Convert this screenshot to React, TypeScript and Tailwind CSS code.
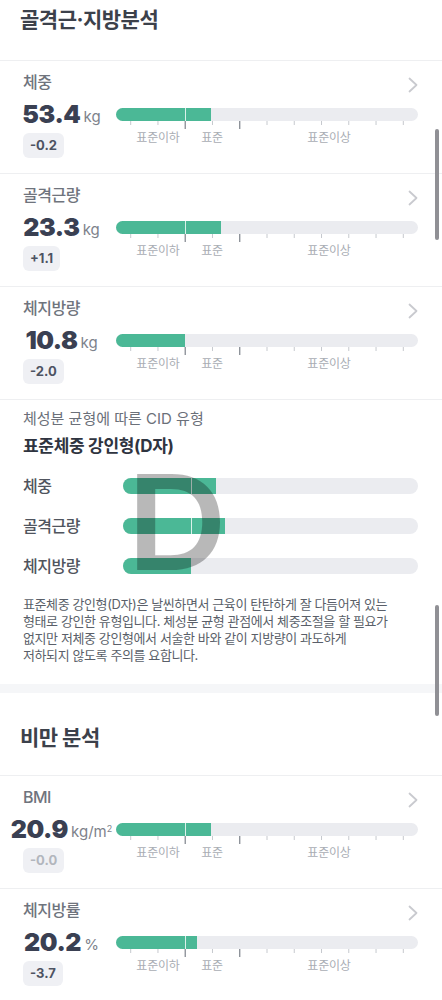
import React from "react";

type Metric = {
  label: string;
  value: string;
  unit: React.ReactNode;
  delta: string;
  muted?: boolean;
  fill: number;
  divider: boolean;
};

const TICKS = Array.from({ length: 11 }, (_, i) => 14.7 + 27.26 * i);

function Chevron() {
  return (
    <svg width="10" height="16" viewBox="0 0 10 16" className="mt-[5px]">
      <polyline
        points="1.5,1.5 8.5,8 1.5,14.5"
        fill="none"
        stroke="#c9cacf"
        strokeWidth="1.8"
        strokeLinecap="round"
        strokeLinejoin="round"
      />
    </svg>
  );
}

function Gauge({ fill, divider }: { fill: number; divider: boolean }) {
  return (
    <div className="w-[302px] shrink-0">
      <div className="relative h-[13px] rounded-full bg-[#ebecf0] overflow-hidden">
        <div className="h-full bg-[#4bb896]" style={{ width: fill }} />
        {divider && <div className="absolute top-0 bottom-0 left-[69px] w-px bg-white/80" />}
      </div>
      <svg width="302" height="8" className="block">
        {TICKS.map((x, i) => {
          const dark = i === 2 || i === 4;
          return (
            <line
              key={i}
              x1={x}
              x2={x}
              y1={0}
              y2={dark ? 8 : 4}
              stroke={dark ? "#7d828b" : "#c6c9ce"}
              strokeWidth={dark ? 1.2 : 1}
            />
          );
        })}
      </svg>
      <div className="relative mt-[1px] h-[16px] text-[12px] leading-[16px] tracking-[-0.2px] text-[#a9adb4]">
        <span className="absolute left-[42px] -translate-x-1/2 whitespace-nowrap">표준이하</span>
        <span className="absolute left-[96px] -translate-x-1/2 whitespace-nowrap">표준</span>
        <span className="absolute left-[213px] -translate-x-1/2 whitespace-nowrap">표준이상</span>
      </div>
    </div>
  );
}

function MetricRow({ m }: { m: Metric }) {
  return (
    <div className="border-b border-[#eeeff1] pl-[23px] pr-[24px] pt-[11px] pb-[15px]">
      <div className="flex h-[20px] items-start justify-between">
        <span className="text-[16px] leading-[20px] tracking-[-0.5px] text-[#6f747d] font-medium">{m.label}</span>
        <Chevron />
      </div>
      <div className="mt-[16px] flex items-start gap-[16px]">
        <div className="w-[77px] shrink-0">
          <div className="flex h-[13px] items-center justify-center whitespace-nowrap">
            <span className="text-[25px] leading-none font-black tracking-[-0.4px] text-[#3a4052]">{m.value}</span>
            <span className="ml-[3px] mt-[4px] text-[15px] leading-none text-[#7d828b]">{m.unit}</span>
          </div>
          <div
            className={
              "mt-[12px] flex h-[25px] w-fit items-center rounded-[6px] bg-[#eff0f4] px-[7px] text-[13px] font-bold " +
              (m.muted ? "text-[#b2b6bd]" : "text-[#4d5362]")
            }
          >
            {m.delta}
          </div>
        </div>
        <Gauge fill={m.fill} divider={m.divider} />
      </div>
    </div>
  );
}

function CidBar({ label, fill, divider }: { label: string; fill: number; divider: boolean }) {
  return (
    <div className="flex h-[40px] items-center">
      <span className="w-[100px] shrink-0 text-[16px] tracking-[-0.5px] text-[#50555e] font-medium">{label}</span>
      <div className="relative h-[16px] w-[295px] rounded-full bg-[#ebecf0] overflow-hidden">
        <div className="h-full bg-[#4bb896]" style={{ width: fill }} />
        {divider && <div className="absolute top-0 bottom-0 left-[68px] w-px bg-white/80" />}
      </div>
    </div>
  );
}

const muscle: Metric[] = [
  { label: "체중", value: "53.4", unit: "kg", delta: "-0.2", fill: 95, divider: true },
  { label: "골격근량", value: "23.3", unit: "kg", delta: "+1.1", fill: 105, divider: true },
  { label: "체지방량", value: "10.8", unit: "kg", delta: "-2.0", fill: 69, divider: false },
];

const obesity: Metric[] = [
  {
    label: "BMI",
    value: "20.9",
    unit: (
      <>
        kg/m<sup className="text-[9px] relative -top-[5px]">2</sup>
      </>
    ),
    delta: "-0.0",
    muted: true,
    fill: 95,
    divider: true,
  },
  { label: "체지방률", value: "20.2", unit: "%", delta: "-3.7", fill: 81, divider: true },
];

export default function App() {
  return (
    <div className="relative w-[442px] min-h-[1000px] overflow-hidden bg-white font-['Inter','Noto_Sans_CJK_KR',sans-serif]">
      <div className="h-[61px] border-b border-[#eeeff1] pl-[20px] pt-[6px]">
        <h1 className="text-[21px] leading-[28px] font-bold tracking-[-0.5px] text-[#3c414b]">골격근·지방분석</h1>
      </div>

      {muscle.map((m) => (
        <MetricRow key={m.label} m={m} />
      ))}

      <div className="pl-[23px] pr-[24px] pt-[9px] pb-[20px]">
        <div className="text-[15px] leading-[20px] tracking-[0px] text-[#6b7079]">체성분 균형에 따른 CID 유형</div>
        <div className="mt-[5px] text-[17px] leading-[24px] font-bold tracking-[-0.3px] text-[#2f3440]">표준체중 강인형(D자)</div>
        <div className="relative mt-[8px]">
          <CidBar label="체중" fill={93} divider />
          <CidBar label="골격근량" fill={102} divider />
          <CidBar label="체지방량" fill={68} divider={false} />
          <span className="pointer-events-none absolute left-[104px] top-[-10px] origin-left scale-x-[1.05] text-[132px] leading-none font-semibold text-black/[0.28] font-['Inter',sans-serif]">
            D
          </span>
        </div>
        <p className="mt-[10px] text-[13px] leading-[17px] tracking-[-0.4px] text-[#5a5f69]">
          <span className="block whitespace-nowrap">표준체중 강인형(D자)은 날씬하면서 근육이 탄탄하게 잘 다듬어져 있는</span>
          <span className="block whitespace-nowrap">형태로 강인한 유형입니다. 체성분 균형 관점에서 체중조절을 할 필요가</span>
          <span className="block whitespace-nowrap">없지만 저체중 강인형에서 서술한 바와 같이 지방량이 과도하게</span>
          <span className="block whitespace-nowrap">저하되지 않도록 주의를 요합니다.</span>
        </p>
      </div>

      <div className="h-[9px] bg-[#f5f6f8]" />

      <div className="h-[83px] border-b border-[#eeeff1] pl-[20px] pt-[31px]">
        <h2 className="text-[21px] leading-[28px] font-bold tracking-[-0.5px] text-[#3c414b]">비만 분석</h2>
      </div>

      {obesity.map((m) => (
        <MetricRow key={m.label} m={m} />
      ))}

      <div className="pointer-events-none absolute left-[435px] top-[129px] h-[111px] w-[4px] rounded-full bg-[#909095]" />
      <div className="pointer-events-none absolute left-[435px] top-[605px] h-[111px] w-[4px] rounded-full bg-[#909095]" />
    </div>
  );
}
